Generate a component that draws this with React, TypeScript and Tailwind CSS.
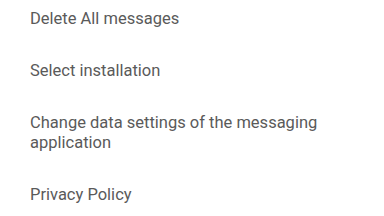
import React from 'react';

const items = [
    'Delete All messages',
    'Select installation',
    'Change data settings of the messaging application',
    'Privacy Policy',
];

const App: React.FC = () => {
    return (
        <div className="w-[384px] h-[216px] bg-white overflow-hidden" style={{ fontFamily: 'Roboto, sans-serif' }}>
            {/* list is scrolled slightly, so the first row is cut at the top */}
            <ul className="flex flex-col -mt-[7px]">
                {items.map(item => (
                    <li key={item} className="pl-[30px] pr-[40px] py-[16px] text-[16.5px] leading-[20px] text-[#5a5a5a]">
                        {item}
                    </li>
                ))}
            </ul>
        </div>
    );
};

export default App;
